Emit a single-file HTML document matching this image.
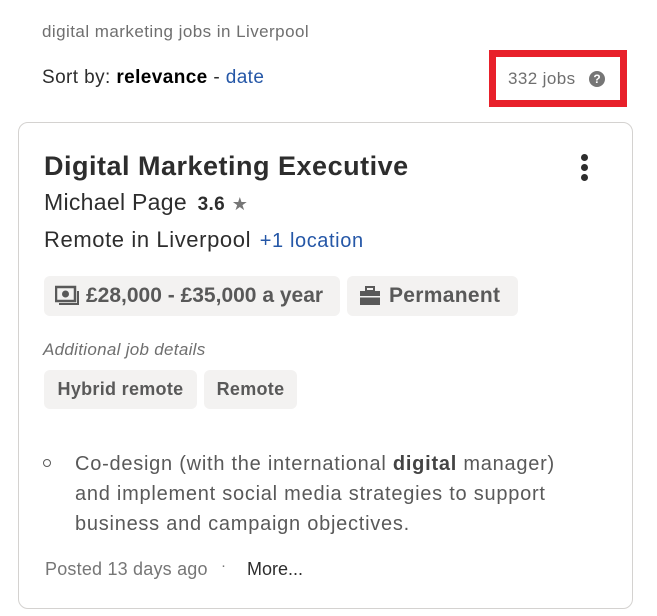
<!DOCTYPE html>
<html><head><meta charset="utf-8"><style>
*{margin:0;padding:0;box-sizing:border-box}
body{width:657px;height:616px;background:#fff;font-family:"Liberation Sans",sans-serif;position:relative;overflow:hidden;color:#2d2d2d}
.a{position:absolute;white-space:nowrap}
.chip{position:absolute;background:#f3f2f1;border-radius:6px;color:#595959;font-weight:bold;display:flex;align-items:center}
</style></head><body>
<div class="a" style="left:42px;top:22px;font-size:17px;letter-spacing:0.45px;color:#6f6f6f">digital marketing jobs in Liverpool</div>
<div class="a" style="left:42px;top:67px;font-size:19px;letter-spacing:0.4px;color:#2d2d2d">Sort by: <b style="color:#000">relevance</b> - <span style="color:#2557a7">date</span></div>
<div class="a" style="left:489px;top:50px;width:138px;height:57px;border:7px solid #e8202a"></div>
<div class="a" style="left:508px;top:69px;font-size:17px;letter-spacing:0.4px;color:#6f6f6f">332 jobs</div>
<div class="a" style="left:589px;top:71px;width:16px;height:16px;border-radius:50%;background:#767676;color:#fff;font-size:12px;font-weight:bold;text-align:center;line-height:16px">?</div>
<div class="a" style="left:18px;top:122px;width:615px;height:487px;border:1px solid #d4d2d0;border-radius:10px"></div>
<div class="a" style="left:44px;top:151px;font-size:27px;letter-spacing:0.5px;font-weight:bold;color:#2d2d2d">Digital Marketing Executive</div>
<div class="a" style="left:581px;top:154px;width:7px;height:7px;border-radius:50%;background:#2d2d2d"></div>
<div class="a" style="left:581px;top:164px;width:7px;height:7px;border-radius:50%;background:#2d2d2d"></div>
<div class="a" style="left:581px;top:174px;width:7px;height:7px;border-radius:50%;background:#2d2d2d"></div>
<div class="a" style="left:44px;top:189px;font-size:23px;letter-spacing:0.3px;color:#2d2d2d">Michael Page <b style="font-size:19px;margin-left:4px">3.6</b> <span style="font-size:18px;color:#767676">★</span></div>
<div class="a" style="left:44px;top:227px;font-size:22px;letter-spacing:0.6px;color:#2d2d2d">Remote in Liverpool <span style="color:#2557a7;font-size:20px;margin-left:2px">+1 location</span></div>
<div class="chip" style="left:44px;top:276px;width:296px;height:40px;padding-left:11px;font-size:21px">
<svg width="25" height="22" viewBox="0 0 25 22" style="margin-right:6px"><rect x="1" y="2" width="19" height="14" fill="none" stroke="#595959" stroke-width="2.5"/><circle cx="10.5" cy="9" r="3.5" fill="#595959"/><path d="M4 19H23V6" fill="none" stroke="#595959" stroke-width="2"/></svg>£28,000 - £35,000 a year</div>
<div class="chip" style="left:347px;top:276px;width:171px;height:40px;padding-left:12px;font-size:21px;letter-spacing:0.3px">
<svg width="22" height="20" viewBox="0 0 22 20" style="margin-right:8px"><rect x="7" y="1" width="8" height="4" fill="none" stroke="#595959" stroke-width="2"/><rect x="1" y="5" width="20" height="14" fill="#595959"/><rect x="1" y="10" width="20" height="1.5" fill="#f3f2f1"/></svg>Permanent</div>
<div class="a" style="left:43px;top:340px;font-size:17px;letter-spacing:0.3px;font-style:italic;color:#6f6f6f">Additional job details</div>
<div class="chip" style="left:44px;top:370px;width:153px;height:39px;justify-content:center;font-size:18px;letter-spacing:0.3px">Hybrid remote</div>
<div class="chip" style="left:204px;top:370px;width:93px;height:39px;justify-content:center;font-size:18px;letter-spacing:0.3px">Remote</div>
<div class="a" style="left:43px;top:459px;width:8px;height:8px;border:1.5px solid #595959;border-radius:50%"></div>
<div class="a" style="left:75px;top:449px;font-size:20px;letter-spacing:0.75px;line-height:30px;color:#595959">Co-design (with the international <b style="color:#444">digital</b> manager)<br>and implement social media strategies to support<br>business and campaign objectives.</div>
<div class="a" style="left:45px;top:559px;font-size:18px;letter-spacing:0.2px;color:#767676">Posted 13 days ago</div>
<div class="a" style="left:221px;top:557px;font-size:15px;color:#767676">·</div>
<div class="a" style="left:247px;top:559px;font-size:18px;color:#2d2d2d">More...</div>
</body></html>
